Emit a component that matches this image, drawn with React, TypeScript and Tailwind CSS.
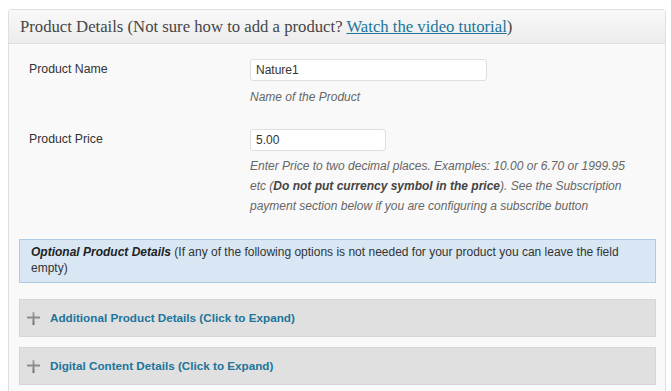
import React from "react";

function Plus() {
  return (
    <svg width="13" height="13" viewBox="0 0 13 13" className="shrink-0">
      <defs>
        <linearGradient id="pg" x1="0" y1="0" x2="0" y2="1">
          <stop offset="0" stopColor="#a8a8a8" />
          <stop offset="1" stopColor="#707070" />
        </linearGradient>
      </defs>
      <rect x="5.5" y="0" width="2" height="13" fill="url(#pg)" />
      <rect x="0" y="4.5" width="13" height="2" fill="#8c8c8c" />
    </svg>
  );
}

function Accordion({ label }: { label: string }) {
  return (
    <div className="h-[38px] bg-[#e0e0e0] border border-[#d5d5d5] flex items-center pl-[7px] gap-[10px]">
      <Plus />
      <span className="text-[11.7px] font-bold text-[#21759b]">{label}</span>
    </div>
  );
}

export default function App() {
  return (
    <div
      className="w-[671px] h-[391px] bg-white overflow-hidden pt-[9px] pl-[8px]"
      style={{ fontFamily: '"Liberation Sans", Arial, sans-serif' }}
    >
      <div className="w-[658px] h-[400px] border border-[#dfdfdf] rounded-t-[3px] bg-[#f9f9f9]">
        <div
          className="h-[34px] bg-gradient-to-b from-[#f9f9f9] to-[#ececec] border-b border-[#dfdfdf] flex items-center pl-[11px] text-[16.7px] text-[#464646]"
          style={{ fontFamily: '"Liberation Serif", Georgia, serif' }}
        >
          <span>
            Product Details (Not sure how to add a product?{" "}
            <span className="text-[#21759b] underline">Watch the video tutorial</span>)
          </span>
        </div>
        <div className="pl-[10px] pr-[10px]">
          <div className="flex pt-[15px]">
            <div className="w-[231px] pl-[10px] pt-[1px] text-[12.3px] text-[#333]">Product Name</div>
            <div className="flex flex-col">
              <div className="w-[237px] h-[22px] bg-white border border-[#dfdfdf] rounded-[3px] flex items-center pl-[5px] text-[12px] text-[#333]">
                Nature1
              </div>
              <div className="mt-[6px] text-[12px] italic text-[#666] leading-[20px]">Name of the Product</div>
            </div>
          </div>
          <div className="flex pt-[22px]">
            <div className="w-[231px] pl-[10px] pt-[1px] text-[12.3px] text-[#333]">Product Price</div>
            <div className="flex flex-col">
              <div className="w-[136px] h-[22px] bg-white border border-[#dfdfdf] rounded-[3px] flex items-center pl-[5px] text-[12px] text-[#333]">
                5.00
              </div>
              <div className="mt-[5px] w-[382px] text-[12px] italic text-[#666] leading-[20px]">
                Enter Price to two decimal places. Examples: 10.00 or 6.70 or 1999.95 etc (
                <b className="text-[#444]">Do not put currency symbol in the price</b>). See the Subscription payment
                section below if you are configuring a subscribe button
              </div>
            </div>
          </div>
          <div className="mt-[23px] w-[637px] border border-[#aecbe6] bg-[#d9e7f5] px-[11px] pt-[4px] pb-[6px] text-[12px] leading-[16px] text-[#333]">
            <b className="italic text-[#222]">Optional Product Details</b> (If any of the following options is not needed
            for your product you can leave the field empty)
          </div>
          <div className="mt-[16px] w-[637px] flex flex-col gap-[10px]">
            <Accordion label="Additional Product Details (Click to Expand)" />
            <Accordion label="Digital Content Details (Click to Expand)" />
          </div>
        </div>
      </div>
    </div>
  );
}
